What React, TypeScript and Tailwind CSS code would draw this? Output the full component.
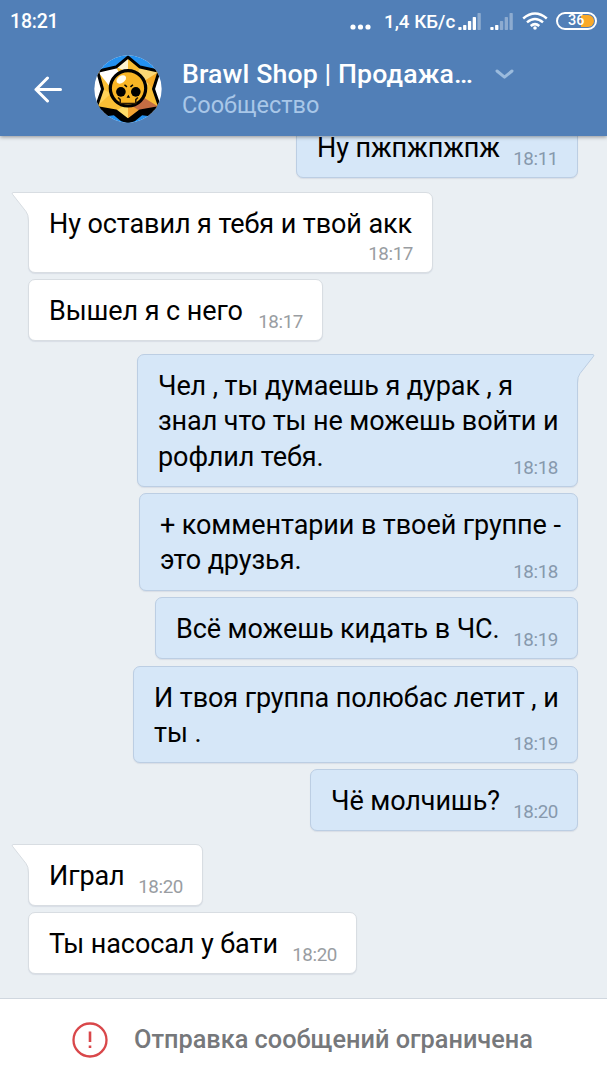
import React from 'react';

type Message = {
  lines: string[];
  time: string;
  out?: boolean;
  tail?: boolean;
  box: string;
};

const messages: Message[] = [
  { lines: ['Ну пжпжпжпж'], time: '18:11', out: true, box: 'w-[282px] h-[62px] mt-0' },
  { lines: ['Ну оставил я тебя и твой акк'], time: '18:17', tail: true, box: 'w-[405px] h-[81px] mt-[14px]' },
  { lines: ['Вышел я с него'], time: '18:17', box: 'w-[295px] h-[62px] mt-[6px]' },
  {
    lines: ['Чел , ты думаешь я дурак , я', 'знал что ты не можешь войти и', 'рофлил тебя.'],
    time: '18:18',
    out: true,
    tail: true,
    box: 'w-[441px] h-[133px] mt-[13px]',
  },
  { lines: ['+ комментарии в твоей группе -', 'это друзья.'], time: '18:18', out: true, box: 'w-[439px] h-[98px] mt-[6px]' },
  { lines: ['Всё можешь кидать в ЧС.'], time: '18:19', out: true, box: 'w-[423px] h-[62px] mt-[6px]' },
  { lines: ['И твоя группа полюбас летит , и', 'ты .'], time: '18:19', out: true, box: 'w-[445px] h-[97px] mt-[7px]' },
  { lines: ['Чё молчишь?'], time: '18:20', out: true, box: 'w-[268px] h-[62px] mt-[6px]' },
  { lines: ['Играл'], time: '18:20', tail: true, box: 'w-[175px] h-[62px] mt-[13px]' },
  { lines: ['Ты насосал у бати'], time: '18:20', box: 'w-[329px] h-[62px] mt-[6px]' },
];

function Tail({ out }: { out?: boolean }) {
  return out ? (
    <svg className="absolute -top-px -right-[18px]" width="24" height="30" viewBox="0 0 24 30">
      <path d="M0 .5H22Q23.5 .8 22.5 2.3L9 19.500Q6.500 22.500 6.500 29V30H0Z" fill="#d6e7f8" />
      <path d="M0 .5H22Q23.5 .8 22.5 2.3L9 19.500Q6.500 22.500 6.500 29V30" fill="none" stroke="#bccee3" />
    </svg>
  ) : (
    <svg className="absolute -top-px -left-[18px]" width="24" height="30" viewBox="0 0 24 30">
      <path d="M24 .5H2Q.5 .8 1.5 2.3L15 19.500Q17.5 22.500 17.5 29V30H24Z" fill="#fff" />
      <path d="M24 .5H2Q.5 .8 1.5 2.3L15 19.500Q17.5 22.500 17.5 29V30" fill="none" stroke="#d8dde2" />
    </svg>
  );
}

function Bubble({ lines, time, out, tail, box }: Message) {
  const tone = out
    ? 'self-end mr-[29px] bg-[#d6e7f8] border-[#bccee3]'
    : 'self-start ml-7 bg-white border-[#d8dde2]';
  return (
    <div className={`relative shrink-0 rounded-[7px] border pt-[14px] pl-[20px] shadow-[0_1px_1px_rgba(80,100,130,0.12)] ${tone} ${box}`}>
      {tail && <Tail out={out} />}
      <div className="relative text-[27px] leading-[35.4px] tracking-[-0.09px] text-black">
        {lines.map((line) => (
          <p key={line} className="whitespace-nowrap">{line}</p>
        ))}
      </div>
      <span className={`absolute right-[19px] bottom-[7px] text-[18.8px] leading-[22px] tracking-[-0.4px] ${out ? 'text-[#8799ad]' : 'text-[#999da2]'}`}>
        {time}
      </span>
    </div>
  );
}

function Signal({ strong }: { strong: number }) {
  return (
    <svg width="24" height="17" viewBox="0 0 24 17">
      {[3, 5, 9, 13, 17].map((h, i) => (
        <rect key={h} x={i * 4.8 + 0.3} y={17 - h} width="3.3" height={h} rx=".7" fill="#fff" fillOpacity={i < strong ? 1 : 0.35} />
      ))}
    </svg>
  );
}

function Avatar() {
  const star = 'M48 3L65 17L92 23L84 48L93 74L65 79L48 92L31 79L3 74L12 48L5 23L31 17Z';
  return (
    <svg width="68" height="68" viewBox="0 0 96 96">
      <defs>
        <clipPath id="round"><circle cx="48" cy="48" r="47.5" /></clipPath>
        <clipPath id="star"><path d={star} /></clipPath>
      </defs>
      <g clipPath="url(#round)">
        <rect width="96" height="96" fill="#fff" />
        <path d="M0 0H96V24L48 14L0 24ZM16 84H80V96H16Z" fill="#2491f0" />
        <path d="M4 71L92 71L84 87L68 85L58 93L48 97L38 93L28 85L12 87Z" fill="#000" />
        <g clipPath="url(#star)">
          <rect width="96" height="96" fill="#f9be35" />
          <path d="M5 23L31 17L38 30L22 44Z" fill="#fff" />
          <path d="M48 3V24L31 17Z" fill="#fff4cf" />
          <path d="M48 3L65 17L48 24Z" fill="#f8bd34" />
          <path d="M92 23L65 17L60 30L74 44Z" fill="#fbd775" />
          <path d="M92 23L72 36L84 48Z" fill="#f6a924" />
          <path d="M12 48L24 54L3 74Z" fill="#ffd258" />
          <path d="M48 68L65 79L48 92Z" fill="#f3a331" />
          <path d="M48 68L31 79L48 92Z" fill="#ffdc69" />
          <path d="M70 60L93 74L65 79L50 70Z" fill="#c46d43" />
        </g>
        <path d={star} fill="none" stroke="#000" strokeWidth="4.200" strokeLinejoin="round" />
      </g>
      <circle cx="48" cy="47" r="25" fill="#f9b524" stroke="#000" strokeWidth="4.500" />
      <path d="M34 60L37 63V68.500H59V63L62 60" fill="none" stroke="#2b1b05" strokeWidth="2.200" strokeLinejoin="round" />
      <ellipse cx="38.500" cy="34.500" rx="7.500" ry="5" transform="rotate(-35 38.500 34.500)" fill="#fffdf0" />
      <circle cx="38" cy="52" r="6.800" />
      <circle cx="59" cy="52" r="6.800" />
      <path d="M43 42L46.500 45M55 42L51.500 45" stroke="#000" strokeWidth="2.200" />
      <path d="M48.500 56L46 60.500H51Z" />
    </svg>
  );
}

export default function App() {
  return (
    <div className="flex h-[1080px] w-[607px] flex-col overflow-hidden bg-[#eaeff3] font-['Roboto',sans-serif]">
      <header className="relative z-10 flex h-[136px] shrink-0 flex-col bg-[#517fb7] text-white shadow-[0_1px_4px_rgba(0,0,0,0.4)]">
        <div className="flex h-[44px] items-center pr-[10px] pl-[10px]">
          <span className="text-[19.5px] font-medium leading-[24px] tracking-[-0.2px]">18:21</span>
          <svg className="mt-[9px] ml-auto" width="21" height="6" viewBox="0 0 21 6" fill="#fff">
            <circle cx="3" cy="3" r="2.600" /><circle cx="10.500" cy="3" r="2.600" /><circle cx="18" cy="3" r="2.600" />
          </svg>
          <span className="ml-[13px] w-[71px] whitespace-nowrap text-[18.8px] font-medium leading-[24px]">1,4 КБ/с</span>
          <div className="mt-[-2px] ml-[3px] flex gap-[8px]"><Signal strong={4} /><Signal strong={2} /></div>
          <svg className="mt-[-2px] ml-[8px]" width="26" height="18" viewBox="0 0 26 18" fill="none" stroke="#fff" strokeWidth="2.500">
            <path d="M1.200 6.500Q13-3.500 24.800 6.500M5 10.400Q13 3.600 21 10.400M8.700 14Q13 10.300 17.300 14" />
            <circle cx="13" cy="16" r="1.800" fill="#fff" stroke="none" />
          </svg>
          <div className="relative mt-[-2px] ml-[8px] h-[18px] w-[41px] overflow-hidden rounded-full border-2 border-white">
            <span className="absolute top-[1px] right-[1px] h-[12px] w-[13px] rounded-r-full bg-[#faa928]" />
            <span className="absolute top-0 left-[10px] text-[14.5px] font-medium leading-[14px]">36</span>
          </div>
        </div>
        <div className="flex h-[92px] items-start">
          <svg className="mt-[31px] ml-[33px]" width="30" height="28" viewBox="0 0 30 28" fill="none" stroke="#fff" strokeWidth="3" strokeLinecap="round" strokeLinejoin="round">
            <path d="M27.500 14.500H3M14.500 3L3 14.500L14.500 26" />
          </svg>
          <div className="mt-[11px] ml-[31px]"><Avatar /></div>
          <div className="ml-[20px] w-[293px]">
            <h1 className="mt-[14px] whitespace-nowrap text-[26.700px] font-medium leading-[33px] tracking-[0.12px]">Brawl Shop | Продажа…</h1>
            <p className="text-[23.5px] leading-[28px] text-[#a9c7e8]">Сообщество</p>
          </div>
          <svg className="mt-[25px] ml-[20px]" width="19" height="11" viewBox="0 0 19 11" fill="none" stroke="#9bbbdd" strokeWidth="3" strokeLinecap="round" strokeLinejoin="round">
            <path d="M2 2L9.500 8.200L17 2" />
          </svg>
        </div>
      </header>
      <main className="-mt-[20px] flex flex-1 flex-col">
        {messages.map((message, i) => <Bubble key={i} {...message} />)}
      </main>
      <footer className="flex h-[82px] shrink-0 items-center border-t border-[#d0d7df] bg-white pl-[72px]">
        <svg width="36" height="36" viewBox="0 0 36 36" fill="none" stroke="#d9474a">
          <circle cx="18" cy="18" r="16.500" strokeWidth="2.300" />
          <path d="M18 9.500V20M18 23.500V26" strokeWidth="2.600" />
        </svg>
        <span className="ml-[26px] whitespace-nowrap text-[25.3px] font-medium text-[#76787b]">Отправка сообщений ограничена</span>
      </footer>
    </div>
  );
}
